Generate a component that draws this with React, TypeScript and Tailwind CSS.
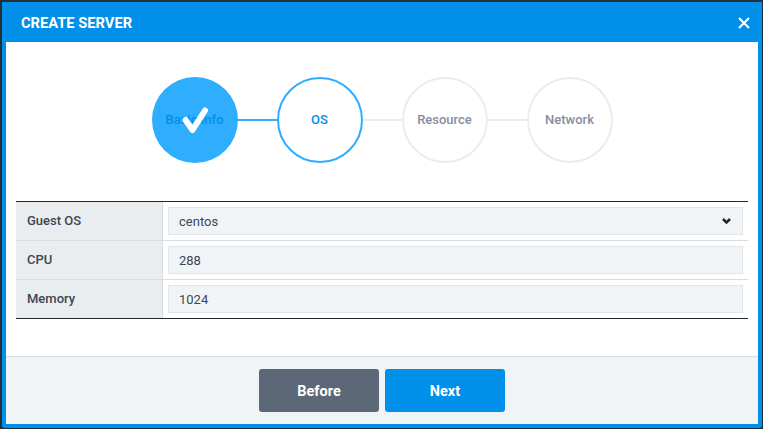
const steps = [
  { label: 'Basic Info', state: 'done' },
  { label: 'OS', state: 'active' },
  { label: 'Resource', state: 'todo' },
  { label: 'Network', state: 'todo' },
];

const fields = [
  { label: 'Guest OS', value: 'centos', select: true, rowClass: 'h-[39px] border-b border-[#d8dde1]' },
  { label: 'CPU', value: '288', rowClass: 'h-[39px] border-b border-[#d8dde1]' },
  { label: 'Memory', value: '1024', rowClass: 'h-[38px]' },
];

const App = () => {
  return (
    <div className="h-[429px] w-[763px] overflow-hidden bg-[#22303c] pb-px pl-[2px] pr-px pt-[2px] font-['Roboto',sans-serif]">
      <div className="flex h-full flex-col rounded-[3px] border-x-4 border-b-4 border-[#0090ea] bg-white">
        {/* Header */}
        <div className="-mx-1 flex h-[40px] shrink-0 items-center justify-between bg-[#0090ea] pl-[19px] pr-[12px] pt-[2px]">
          <span className="text-[14.7px] font-bold text-white">CREATE SERVER</span>
          <svg className="mb-[1px] h-[12px] w-[12px]" viewBox="0 0 12 12" fill="none">
            <path d="M1 1L11 11M11 1L1 11" stroke="white" strokeWidth="2" />
          </svg>
        </div>

        {/* Steps */}
        <div className="flex h-[159px] shrink-0 items-center justify-center pb-[3px]">
          {steps.map((step, i) => (
            <div key={step.label} className="flex items-center">
              {i > 0 && (
                <div className={`h-[2px] w-[39px] ${i === 1 ? 'bg-[#2fadff]' : 'bg-[#e9edf2]'}`} />
              )}
              {step.state === 'done' ? (
                <div className="relative flex h-[86px] w-[86px] items-center justify-center rounded-full bg-[#2fadff] text-[13px] font-medium text-[#0090ea]">
                  {step.label}
                  <svg className="absolute inset-0 h-[86px] w-[86px]" viewBox="0 0 86 86" fill="none">
                    <path d="M33.5 43L40.5 53L53 33.5" stroke="white" strokeWidth="6" strokeLinecap="round" strokeLinejoin="round" />
                  </svg>
                </div>
              ) : (
                <div
                  className={`flex h-[86px] w-[86px] items-center justify-center rounded-full border-2 bg-white text-[13px] font-medium ${
                    step.state === 'active' ? 'border-[#2fadff] text-[#0090ea]' : 'border-[#e9edf2] text-[#868e9e]'
                  }`}
                >
                  {step.label}
                </div>
              )}
            </div>
          ))}
        </div>

        {/* Form table */}
        <div className="mx-[10px] shrink-0 border-y border-[#22282f]">
          {fields.map((field) => (
            <div key={field.label} className={`flex text-[13px] ${field.rowClass}`}>
              <div className="flex w-[147px] shrink-0 items-center border-r border-[#d8dde1] bg-[#e9edf0] pl-[11px] font-medium text-[#3e4652]">
                {field.label}
              </div>
              <div className="flex-1 pl-[5px] pt-[5px]">
                <div className="flex h-[28px] w-[575px] items-center justify-between border border-[#e2e6e9] bg-[#f1f4f7] pl-[10px] pr-[11px] pt-[2px] text-[#3e4652]">
                  <span>{field.value}</span>
                  {field.select && (
                    <svg className="mb-[2px] h-[6px] w-[9px]" viewBox="0 0 9 6" fill="none">
                      <path d="M1 1L4.5 4.5L8 1" stroke="#1f2430" strokeWidth="2.5" />
                    </svg>
                  )}
                </div>
              </div>
            </div>
          ))}
        </div>

        <div className="flex-1" />

        {/* Footer */}
        <div className="flex h-[68px] shrink-0 items-center justify-center gap-[6px] border-t border-[#d8dde1] bg-[#f1f4f7]">
          <button className="h-[43px] w-[120px] rounded-[3px] bg-[#5c6778] pt-[2px] text-[14.5px] font-bold text-white">Before</button>
          <button className="h-[43px] w-[120px] rounded-[3px] bg-[#0090ea] pt-[2px] text-[14.5px] font-bold text-white">Next</button>
        </div>
      </div>
    </div>
  );
};

export default App;
